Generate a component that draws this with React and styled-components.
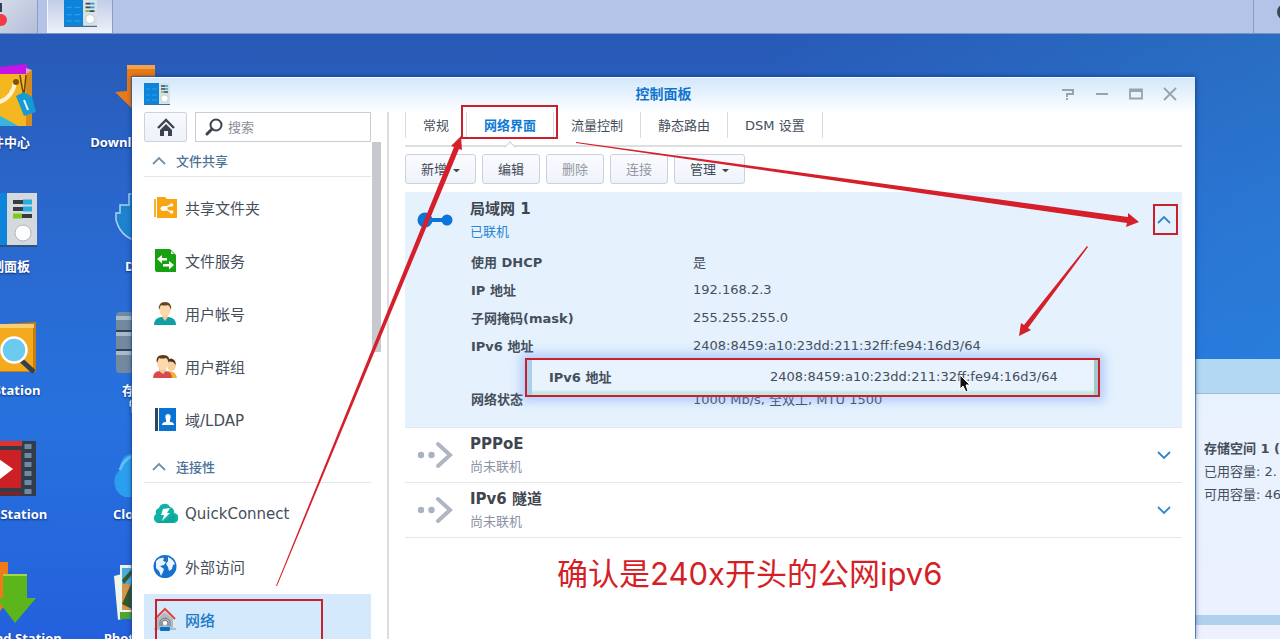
import styled, { createGlobalStyle } from "styled-components";

const GlobalStyle = createGlobalStyle`
  * {
    box-sizing: border-box;
  }

  body {
    margin: 0;
    overflow: hidden;
    font-family: "DejaVu Sans", "Noto Sans CJK SC", sans-serif;
    font-size: 13px;
    color: #454e5a;
  }

  button,
  input {
    font: inherit;
    color: inherit;
  }
`;

const Desktop = styled.div`
  position: relative;
  display: flex;
  flex-direction: column;
  height: 100vh;
  overflow: hidden;
  background: linear-gradient(
      90deg,
      rgba(42, 160, 225, 0) 60%,
      rgba(42, 160, 225, 0.28) 100%
    ),
    linear-gradient(180deg, #2857b2 0%, #2a66cb 30%, #2772de 65%, #2460dc 100%);
`;

/* Taskbar */

const Taskbar = styled.header`
  display: flex;
  flex: none;
  height: 34px;
  background: #b4c3e8;
  border-bottom: 1px solid #7d93c4;
`;

const TaskButton = styled.button`
  display: flex;
  padding: 0;
  width: ${(props) => (props.$active ? "66px" : "38px")};
  margin-right: 9px;
  border: 0;
  border-left: ${(props) => (props.$active ? "1px solid #f4f7fd" : "0")};
  border-right: 1px solid #8b9bc2;
  justify-content: ${(props) => (props.$active ? "center" : "flex-start")};
  background: ${(props) =>
    props.$active
      ? "linear-gradient(180deg, #c3cde8, #eef1fa)"
      : "linear-gradient(135deg, #d5dbea, #b3bed9)"};
`;

const Tray = styled.div`
  display: flex;
  width: 27px;
  margin-left: auto;
  border-left: 1px solid #8b9bc2;
  justify-content: flex-end;
`;

/* Desktop icons */

const IconGrid = styled.div`
  display: grid;
  grid-template-columns: 144px 144px;
  grid-auto-rows: 124px;
  margin: 28px 0 0 -68px;
`;

const Shortcut = styled.button`
  display: flex;
  flex-direction: column;
  align-items: center;
  gap: 8px;
  padding: 0;
  border: 0;
  background: none;
  color: white;
  font-family: "Open Sans", "Noto Sans CJK SC", sans-serif;
  font-weight: bold;
  line-height: 16px;
  text-shadow: 0 1px 2px rgba(0, 20, 80, 0.7);

  svg {
    flex: none;
    overflow: visible;
  }

  span {
    max-width: 120px;
    white-space: pre-line;
  }
`;

/* Storage widget */

const Widget = styled.aside`
  position: absolute;
  top: 359px;
  right: 0;
  bottom: 0;
  width: 100px;
  overflow: hidden;
  white-space: nowrap;
  background: #b1d0ee;
`;

const WidgetHead = styled.div`
  height: 35px;
  background: #b2d8f3;
  border-bottom: 1px solid #9dbcd8;
`;

const WidgetBody = styled.div`
  height: 221px;
  padding: 43px 0 0 24px;
  line-height: 23px;
  background: linear-gradient(180deg, #e8f2fd, #ebf1fe);

  p {
    margin: 0;
  }

  p:first-child {
    font-weight: bold;
  }
`;

const WidgetNext = styled.div`
  height: 40px;
  margin-top: 10px;
  background: #edf1fe;
`;

/* Control panel window */

const Window = styled.section`
  position: absolute;
  top: 77px;
  left: 132px;
  right: 85px;
  bottom: 0;
  display: flex;
  flex-direction: column;
  background: white;
  box-shadow: 0 0 0 1px rgba(22, 88, 170, 0.6), 0 0 5px rgba(0, 20, 70, 0.6);
`;

const TitleBar = styled.div`
  display: grid;
  grid-template-columns: 1fr auto 1fr;
  align-items: center;
  flex: none;
  height: 35px;
  padding: 0 17px 3px 12px;
  border-top: 1px solid #f3f9ff;
  background: linear-gradient(180deg, #d3e8fb, #fdfeff);
`;

const Title = styled.h1`
  margin: 0;
  padding-left: 5px;
  font-size: 14px;
  font-weight: bold;
  line-height: 20px;
  color: #0f75cf;
`;

const WindowButtons = styled.div`
  display: flex;
  justify-content: flex-end;
  gap: 18px;
`;

const PlainButton = styled.button`
  display: flex;
  padding: 0;
  border: 0;
  background: none;
`;

const WindowBody = styled.div`
  display: flex;
  flex: 1;
  min-height: 0;
`;

const Sidebar = styled.nav`
  display: flex;
  flex-direction: column;
  flex: none;
  width: 257px;
  padding-left: 12px;
  border-right: 2px solid #dddde1;
  overflow: hidden;
`;

const SearchRow = styled.div`
  display: flex;
  flex: none;
  gap: 8px;
  height: 30px;
`;

const HomeButton = styled.button`
  display: flex;
  align-items: center;
  justify-content: center;
  width: 43px;
  padding: 0;
  border: 1px solid #cdd3dd;
  border-radius: 2px;
  background: linear-gradient(180deg, #f7f9fd, #edf2fa);
`;

const SearchBox = styled.label`
  display: flex;
  align-items: center;
  gap: 5px;
  width: 176px;
  padding-left: 9px;
  border: 1px solid #c9ced6;

  input {
    width: 130px;
    padding: 0;
    border: 0;
    outline: 0;
  }

  input::placeholder {
    color: #8a8f98;
  }
`;

const SidebarScroll = styled.div`
  display: flex;
  gap: 1px;
`;

const ScrollThumb = styled.div`
  width: 9px;
  height: 210px;
  background: #c8c8cf;
`;

const Groups = styled.div`
  width: 227px;
`;

const GroupTitle = styled.button`
  display: flex;
  align-items: center;
  gap: 10px;
  width: 100%;
  height: 35px;
  padding: 3px 0 0 8px;
  border: 0;
  border-bottom: 1px solid #e2e7ed;
  background: none;
  color: #4b7396;
  font-weight: 500;
`;

const GroupList = styled.ul`
  margin: 0;
  padding: 5px 0 1px;
  list-style: none;
`;

const SideLink = styled.a`
  position: relative;
  display: flex;
  align-items: center;
  gap: 7px;
  height: 53px;
  padding: 0 0 2px 9px;
  font-size: 15px;
  text-decoration: none;
  color: ${(props) => (props.$active ? "#1c7ac8" : "#454e5a")};
  font-weight: ${(props) => (props.$active ? "500" : "400")};
  background: ${(props) => (props.$active ? "#d4e9fc" : "none")};
`;

const Content = styled.main`
  flex: 1;
  min-width: 0;
  padding: 0 13px 0 16px;
`;

const Tabs = styled.div`
  display: flex;
  height: 35px;
  padding-bottom: 7px;
  border-bottom: 2px solid #dedfe1;
`;

const Tab = styled.button`
  position: relative;
  padding: 0 17px 2px;
  border: 0;
  border-right: 1px solid #d9dce0;
  background: none;
  white-space: nowrap;
  color: ${(props) => (props.$active ? "#0f7ad6" : "inherit")};
  font-weight: ${(props) => (props.$active ? "bold" : "400")};

  &:first-child {
    border-left: 1px solid #d9dce0;
  }
`;

const Notch = styled.i`
  position: absolute;
  left: 50%;
  bottom: -13px;
  width: 8px;
  height: 8px;
  margin-left: -4px;
  border: solid #d0d2d5;
  border-width: 1px 0 0 1px;
  transform: rotate(45deg);
  background: white;
`;

const Toolbar = styled.div`
  display: flex;
  gap: 6px;
  padding: 7px 0 8px;
`;

const ToolButton = styled.button`
  display: flex;
  align-items: center;
  gap: 6px;
  height: 30px;
  padding: 0 15px 2px;
  border: 1px solid #c9d2df;
  border-radius: 3px;
  background: linear-gradient(180deg, #fafbfe, #eef3fb);
  color: ${(props) => (props.disabled ? "#9398a0" : "#414a56")};
  white-space: nowrap;
`;

const Caret = styled.i`
  width: 7px;
  margin-top: 4px;
  border: solid transparent;
  border-width: 3px 3px 0;
  border-top-color: #414a56;
`;

const Connection = styled.article`
  position: relative;
  border-bottom: 1px solid #e4e7eb;
  background: ${(props) => (props.$open ? "#e5f2fe" : "white")};
  height: ${(props) => (props.$open ? "236px" : "55px")};
`;

const ConnectionHead = styled.div`
  display: flex;
  align-items: center;
  gap: 16px;
  height: ${(props) => (props.$open ? "56px" : "54px")};
  padding: 0 11px 0 12px;

  > svg {
    flex: none;
  }

  button {
    position: relative;
    margin-left: auto;
  }
`;

const Name = styled.h2`
  margin: 0;
  font-size: 15px;
  line-height: 24px;
  color: #3f4650;
`;

const Status = styled.p`
  margin: 0;
  line-height: 22px;
  color: ${(props) => (props.$on ? "#2a86d2" : "#8b93a5")};
`;

const Details = styled.table`
  margin-left: 66px;
  border-collapse: collapse;

  th,
  td {
    height: 28px;
    padding: 0 0 2px;
    text-align: left;
    white-space: nowrap;
  }

  th {
    width: 222px;
  }

  tr:last-child th,
  tr:last-child td {
    height: 53px;
    padding-top: 25px;
  }
`;

const Callout = styled.div`
  position: absolute;
  top: 166px;
  left: 120px;
  width: 575px;
  height: 39px;
  display: flex;
  align-items: center;
  padding: 0 0 3px 22px;
  border: 2px solid #c9202e;
  background: #e8f3fd;
  box-shadow: inset 5px 0 0 #a9cfe9, inset -4px 0 0 #a3c9cc,
    inset 0 -4px 2px #c5e7e2, 0 0 10px 4px rgba(110, 150, 245, 0.45);

  b {
    flex: none;
    width: 221px;
  }
`;

const Note = styled.p`
  margin: 18px 0 0 152px;
  font-family: Inter, "Noto Sans CJK SC", sans-serif;
  font-size: 31px;
  font-weight: 400;
  line-height: 36px;
  color: #d51f27;
  white-space: nowrap;
`;

const Mark = styled.i`
  position: absolute;
  top: ${(props) => props.$top};
  right: ${(props) => props.$right};
  bottom: ${(props) => props.$bottom};
  left: ${(props) => props.$left};
  border: 2px solid #c9202e;
`;

const Arrows = styled.svg`
  position: absolute;
  top: 0;
  left: 0;
  pointer-events: none;
`;

function PanelIcon({ width, height }) {
  return (
    <svg width={width} height={height} viewBox="0 0 26 22" preserveAspectRatio="none">
      <rect y="1" width="26" height="21" fill="#3f6f94" />
      <rect width="15" height="21" fill="#0d83da" />
      <rect x="15" width="11" height="21" fill="#d9e0e6" />
      <path d="M2 6h4M8 6h5M2 12h4M8 12h5M2 17h4M8 17h5" stroke="#2a9fe6" strokeWidth="1" />
      <path d="M17 3h4M17 6h4M20 9h4" stroke="#37495a" strokeWidth="1.5" />
      <path d="M21 3h3M21 6h3" stroke="#22a4dc" strokeWidth="1.5" />
      <path d="M17 9h3" stroke="#6cc22b" strokeWidth="1.5" />
      <circle cx="20.5" cy="15.5" r="3.6" fill="#fbfdff" stroke="#b6c1ca" strokeWidth=".6" />
    </svg>
  );
}

function Chevron({ up, color = "#2f86cb", size = 14 }) {
  return (
    <svg width={size} height="10" viewBox="0 0 14 10" fill="none" stroke={color} strokeWidth="1.8">
      <path d={up ? "M1 8 7 2l6 6" : "M1 2l6 6 6-6"} />
    </svg>
  );
}

const sideIcons = {
  share: (
    <>
      <path d="M1 4h2v18H1z" fill="#f5b234" />
      <path d="M4 2h8l2 2h10v19H4z" fill="#f9a510" />
      <path d="m18 10-7 3 7 4" stroke="#fff" strokeWidth="1.4" fill="none" />
      <ellipse cx="11" cy="13.500" rx="3.500" ry="2.500" fill="#fff" />
      <circle cx="18.500" cy="10" r="1.800" fill="#fff" />
      <circle cx="18.500" cy="17" r="1.800" fill="#fff" />
    </>
  ),
  file: (
    <>
      <path d="M2 1h15l6 6v17H4a2 2 0 0 1-2-2z" fill="#17a00f" />
      <path d="m18 3 3 3h-3z" fill="#fff" />
      <path d="m4 11 5-4v3h5v2.500H9v3zM21 17l-5-4v3h-6v2.500h6v3z" fill="#fff" />
    </>
  ),
  user: (
    <>
      <path d="M1 24q0-7 7-8h8q7 1 7 8z" fill="#10a0a3" />
      <path d="M9 12h6v4l-3 4-3-4z" fill="#f3c99a" />
      <ellipse cx="12" cy="9" rx="5.500" ry="7" fill="#fbd9ad" />
      <path d="M6 9Q5 1 12 1t6 8q-1-4-3-5-4 1-7 0-1 2-2 5z" fill="#6a3f22" />
    </>
  ),
  group: (
    <>
      <path d="M15 17q8 0 9 7h-7z" fill="#f2b036" />
      <ellipse cx="18.500" cy="11" rx="4.500" ry="6" fill="#fbd0a0" />
      <path d="M14 7q4-5 8 0l1 4-3-3z" fill="#50301d" />
      <path d="M0 24q0-6 6-7h7q6 1 6 7z" fill="#d64b4c" />
      <path d="M6 13h7v4l-3 3-4-3z" fill="#f3c99a" />
      <ellipse cx="9.500" cy="9" rx="5.500" ry="7" fill="#fbd9ad" />
      <path d="M4 9Q2 1 10 1t6 8q-1-4-3-5-4 1-7 0-1 2-2 5z" fill="#5f3820" />
    </>
  ),
  ldap: (
    <>
      <path d="M2 1h3v23H2z" fill="#2f4559" />
      <path d="M6 1h17v23H6z" fill="#0a72d2" />
      <path d="M9 18q0-3 4-3v-2q-2-6 2-6t2 6v2q4 0 4 3z" fill="#fff" />
    </>
  ),
  quick: (
    <>
      <path d="M5 22a5 5 0 0 1-2-9 5 5 0 0 1 3-6 6 6 0 0 1 11-1 5 5 0 0 1 4 6 5 5 0 0 1-1 10z" fill="#10b2a8" />
      <path d="M4 20q10 2 15-7l4 3q0 5-4 6H5z" fill="#08998f" opacity=".5" />
      <path d="m10 8 7-1-3 5h3l-8 8 2-6H8z" fill="#fff" />
    </>
  ),
  globe: (
    <>
      <circle cx="12" cy="12.500" r="11.500" fill="#1670cc" />
      <path d="M3 7q4-4 8-3l-1 3 3 1-2 3-4 1 4 3-1 3-2 4-2-5-3-3zM15 3q5 2 7 7l-2 1-1 4-3 2-1-4-2-3 2-3z" fill="#eaf5ff" />
    </>
  ),
  network: (
    <>
      <path d="M4 12 12 5l8 7v9H4z" fill="#b4b9c0" />
      <path d="M7 19v-5q5-6 10 0v5M9 19v-4q3-4 6 0v4" stroke="#73777c" fill="none" />
      <circle cx="12" cy="16" r="2" fill="#fff" />
      <path d="M2 12 12 2l10 10" fill="none" stroke="#e2433d" strokeWidth="2" />
      <path d="M1 22h22" stroke="#8395a7" />
      <rect x="7" y="20" width="10" height="4" rx="1" fill="#0a72c6" />
    </>
  ),
};

const groups = [
  {
    title: "文件共享",
    items: [
      { icon: "share", label: "共享文件夹" },
      { icon: "file", label: "文件服务" },
      { icon: "user", label: "用户帐号" },
      { icon: "group", label: "用户群组" },
      { icon: "ldap", label: "域/LDAP" },
    ],
  },
  {
    title: "连接性",
    items: [
      { icon: "quick", label: "QuickConnect" },
      { icon: "globe", label: "外部访问" },
      { icon: "network", label: "网络", active: true },
    ],
  },
];

const shortcuts = [
  {
    label: "套件中心",
    art: (
      <>
        <path d="M0 8 54 2l6 14H0z" fill="#c414e8" />
        <path d="m54 6 6 2v12h-6z" fill="#e99cc4" />
        <path d="M0 12h60v52H0z" fill="#f4b71f" />
        <path d="M54 12l6-4v56h-6z" fill="#d48d1c" />
        <path d="M0 64V44q20 4 46 20z" fill="#38b5dc" />
        <path d="M18 42q22-2 25-22" fill="none" stroke="#fff3cf" strokeWidth="4" />
        <circle cx="44" cy="20" r="3" fill="#80500f" />
        <path d="M48 13q2 14 4 20l2-20" fill="none" stroke="#65440f" strokeWidth="1.500" />
        <path d="m44 34 8-4 8 5 4 15-12 4z" fill="#149bd5" />
        <path d="m52 38 4 10" stroke="#e7faff" strokeWidth="2" />
      </>
    ),
  },
  {
    label: "Download Station",
    art: (
      <>
        <path d="M11 3h28v26h12L32 62-1 30l12-1z" fill="#e97a18" />
        <path d="M11 3h28v4H11z" fill="#f2a14c" />
      </>
    ),
  },
  {
    label: "控制面板",
    art: (
      <>
        <path d="M0 8h65v53H0z" fill="#2b5380" />
        <path d="M0 7h35v52H0z" fill="#0d83da" />
        <path d="M35 7h30v52H35z" fill="#d5d8dc" />
        <path d="M41 16h12M41 23h12M50 30h10" stroke="#353b42" strokeWidth="4" />
        <path d="M51 16h9M51 23h9" stroke="#27aee3" strokeWidth="5" />
        <path d="M41 30h9" stroke="#78cc1f" strokeWidth="5" />
        <circle cx="51" cy="47" r="8" fill="#fbfdff" stroke="#b2b8bf" />
      </>
    ),
  },
  {
    label: "Docker",
    art: (
      <path
        d="M0 34V27h4v-8h9V8h44v19h8q-4 28-34 29Q6 56 0 34z"
        fill="#1e83cf"
        stroke="#a5d3f3"
        strokeWidth="1.500"
      />
    ),
  },
  {
    label: "File Station",
    art: (
      <>
        <path d="M0 16 64 12v50H0z" fill="#c77d12" />
        <path d="M0 18h61v43H0z" fill="#f5a91c" />
        <path d="M0 14h62v4H0z" fill="#f8cf73" />
        <path d="m49 50 13 12" stroke="#30404e" strokeWidth="5" />
        <circle cx="42" cy="40" r="12.500" fill="#6cc9f0" stroke="#fff" strokeWidth="2.500" />
      </>
    ),
  },
  {
    label: "存储空间\n管理员",
    art: (
      <>
        <rect y="2" width="64" height="61" rx="4" fill="#72899f" />
        <path d="M0 8h64M0 24h64M0 43h64" stroke="#a9bac9" strokeWidth="4" />
        <path d="M0 21h64M0 40h64" stroke="#2e4357" strokeWidth="2" />
      </>
    ),
  },
  {
    label: "Video Station",
    art: (
      <>
        <path d="M0 7h64v55H0z" fill="#333d49" />
        <path d="M0 7h50v5H0z" fill="#e2322c" />
        <path d="M0 16h49v38H0z" fill="#cd2024" />
        <path d="M0 58h49v3H0z" fill="#8e1c20" />
        <path d="m20 20 21 15-21 16z" fill="#fff" />
        <path d="M56 10v52" stroke="#7189a5" strokeWidth="7" strokeDasharray="5 4" />
      </>
    ),
  },
  {
    label: "Cloud Sync",
    art: (
      <>
        <path d="M9 63a16 16 0 0 1-4-28 12 12 0 0 1 10-15q32-10 44 14a15 15 0 0 1-4 29z" fill="#2a9ff0" />
        <path d="M4 36q4-12 14-14" fill="none" stroke="#62bdf7" strokeWidth="3" />
      </>
    ),
  },
  {
    label: "Download Station",
    art: (
      <>
        <path d="M4 4h32v28h10L22 60 0 32h4z" fill="#f0791a" />
        <path d="M31 16h24v24h9L43 65 24 40h7z" fill="#5db51c" />
        <path d="M31 16h24v2H31z" fill="#a2d74a" />
      </>
    ),
  },
  {
    label: "Photo Station",
    art: (
      <>
        <path d="m-2 18 8-2 4 44-8 2z" fill="#edf6e8" />
        <path d="M4 7h60v54H4z" fill="#eff6ee" />
        <path d="M6 10h56v22H6z" fill="#4cacd8" />
        <path d="M6 26h56v26H6z" fill="#d5974d" />
        <path d="m6 22 9-10 4 1-11 13zM6 46l10-22v27z" fill="#35582c" />
        <path d="M4 54h60v7H4z" fill="#4ea62c" />
      </>
    ),
  },
];

const details = [
  ["使用 DHCP", "是"],
  ["IP 地址", "192.168.2.3"],
  ["子网掩码(mask)", "255.255.255.0"],
  ["IPv6 地址", "2408:8459:a10:23dd:211:32ff:fe94:16d3/64"],
  ["网络状态", "1000 Mb/s, 全双工, MTU 1500"],
];

function SideGroup({ group }) {
  return (
    <>
      <GroupTitle>
        <Chevron up color="#7590a8" />
        {group.title}
      </GroupTitle>
      <GroupList>
        {group.items.map((item) => (
          <li key={item.label}>
            <SideLink href="#" $active={item.active}>
              <svg width="25" height="25" viewBox="0 0 25 25">
                {sideIcons[item.icon]}
              </svg>
              {item.label}
              {item.active && (
                <Mark $top="5px" $right="48px" $bottom="-8px" $left="11px" />
              )}
            </SideLink>
          </li>
        ))}
      </GroupList>
    </>
  );
}

function IdleConnection({ name }) {
  return (
    <Connection>
      <ConnectionHead>
        <svg width="37" height="28" viewBox="0 0 37 28">
          <circle cx="4" cy="14" r="3.200" fill="#aab1c3" />
          <circle cx="14.500" cy="14" r="3.200" fill="#aab1c3" />
          <path d="m21 3 12 11-12 11" fill="none" stroke="#b0b5c2" strokeWidth="4" strokeLinecap="round" />
        </svg>
        <div>
          <Name>{name}</Name>
          <Status>尚未联机</Status>
        </div>
        <PlainButton aria-label="展开">
          <Chevron />
        </PlainButton>
      </ConnectionHead>
    </Connection>
  );
}

function ControlPanel() {
  return (
    <Window>
      <TitleBar>
        <PanelIcon width={26} height={22} />
        <Title>控制面板</Title>
        <WindowButtons>
          <PlainButton aria-label="帮助">
            <svg width="16" height="16" viewBox="0 0 16 16" fill="none" stroke="#9aa2aa" strokeWidth="2">
              <path d="M2 4h11v4H7v3M7 12v2" />
            </svg>
          </PlainButton>
          <PlainButton aria-label="最小化">
            <svg width="16" height="16" viewBox="0 0 16 16" stroke="#9aa2aa" strokeWidth="2">
              <path d="M2 8h12" />
            </svg>
          </PlainButton>
          <PlainButton aria-label="最大化">
            <svg width="16" height="16" viewBox="0 0 16 16" fill="none" stroke="#9aa2aa" strokeWidth="1.800">
              <path d="M2 3.500h12v9H2zM2 5h12" />
            </svg>
          </PlainButton>
          <PlainButton aria-label="关闭">
            <svg width="16" height="16" viewBox="0 0 16 16" stroke="#9aa2aa" strokeWidth="1.800">
              <path d="m2 2 12 12M14 2 2 14" />
            </svg>
          </PlainButton>
        </WindowButtons>
      </TitleBar>

      <WindowBody>
        <Sidebar>
          <SearchRow>
            <HomeButton aria-label="主页">
              <svg width="18" height="18" viewBox="0 0 18 18">
                <path d="M1 10 9 2l8 8" fill="none" stroke="#3c434e" strokeWidth="2.400" />
                <path d="m3 12 6-6 6 6v6h-4v-5H7v5H3z" fill="#3c434e" />
              </svg>
            </HomeButton>
            <SearchBox>
              <svg width="18" height="18" viewBox="0 0 18 18" fill="none" stroke="#3c434e">
                <circle cx="11" cy="7" r="5.500" strokeWidth="2" />
                <path d="m7 11-5 5" strokeWidth="3" strokeLinecap="round" />
              </svg>
              <input type="text" placeholder="搜索" aria-label="搜索" />
            </SearchBox>
          </SearchRow>
          <SidebarScroll>
            <Groups>
              {groups.map((group) => (
                <SideGroup key={group.title} group={group} />
              ))}
            </Groups>
            <ScrollThumb />
          </SidebarScroll>
        </Sidebar>

        <Content>
          <Tabs>
            <Tab>常规</Tab>
            <Tab $active>
              网络界面
              <Notch />
              <Mark $top="-7px" $right="-5px" $bottom="-1px" $left="-6px" />
            </Tab>
            <Tab>流量控制</Tab>
            <Tab>静态路由</Tab>
            <Tab>DSM 设置</Tab>
          </Tabs>
          <Toolbar>
            <ToolButton>
              新增
              <Caret />
            </ToolButton>
            <ToolButton>编辑</ToolButton>
            <ToolButton disabled>删除</ToolButton>
            <ToolButton disabled>连接</ToolButton>
            <ToolButton>
              管理
              <Caret />
            </ToolButton>
          </Toolbar>

          <Connection $open>
            <ConnectionHead $open>
              <svg width="37" height="16" viewBox="0 0 37 16" fill="#0a76db">
                <circle cx="8" cy="8" r="7.500" />
                <path d="M8 6h22v4H8z" />
                <circle cx="30" cy="8" r="5.500" />
              </svg>
              <div>
                <Name>局域网 1</Name>
                <Status $on>已联机</Status>
              </div>
              <PlainButton aria-label="收起">
                <Chevron up />
                <Mark $top="-11px" $right="-7px" $bottom="-10px" $left="-4px" />
              </PlainButton>
            </ConnectionHead>
            <Details>
              <tbody>
                {details.map(([label, value]) => (
                  <tr key={label}>
                    <th scope="row">{label}</th>
                    <td>{value}</td>
                  </tr>
                ))}
              </tbody>
            </Details>
            <Callout>
              <b>IPv6 地址</b>
              <span>2408:8459:a10:23dd:211:32ff:fe94:16d3/64</span>
            </Callout>
          </Connection>
          <IdleConnection name="PPPoE" />
          <IdleConnection name="IPv6 隧道" />
          <Note>确认是240x开头的公网ipv6</Note>
        </Content>
      </WindowBody>
    </Window>
  );
}

function App() {
  return (
    <>
      <GlobalStyle />
      <Desktop>
        <Taskbar>
          <TaskButton aria-label="主菜单">
            <svg width="8" height="30" viewBox="0 0 8 30">
              <path d="M0 3h2v9H0z" fill="#343f55" />
              <circle cx="1" cy="20" r="6" fill="#f23b44" />
            </svg>
          </TaskButton>
          <TaskButton $active aria-label="控制面板">
            <PanelIcon width={33} height={27} />
          </TaskButton>
          <Tray>
            <svg width="4" height="30" viewBox="0 0 4 30">
              <circle cx="9" cy="12" r="8" fill="#3b4658" />
            </svg>
          </Tray>
        </Taskbar>

        <IconGrid>
          {shortcuts.map((item, index) => (
            <Shortcut key={index}>
              <svg width="64" height="64" viewBox="0 0 64 64">
                {item.art}
              </svg>
              <span>{item.label}</span>
            </Shortcut>
          ))}
        </IconGrid>

        <Widget>
          <WidgetHead />
          <WidgetBody>
            <p>存储空间 1 (</p>
            <p>已用容量: 2.</p>
            <p>可用容量: 46</p>
          </WidgetBody>
          <WidgetNext />
        </Widget>

        <ControlPanel />

        <Arrows width="1280" height="639" viewBox="0 0 1280 639">
          <g fill="#d51f2a">
            <path d="m276 586 178-439-3-1 10-10 1 14-3-1-182 437z" />
            <path d="m576 142 552 75v-4l11 9-13 5 1-4-551-80z" />
            <path d="m1087 246-63 79-3-2-2 13 12-6-3-2 60-81z" />
          </g>
          <path
            d="M960 375v14l3-3 3 6 2-1-2-6h4z"
            fill="#111"
            stroke="#fff"
            strokeWidth="1"
          />
        </Arrows>
      </Desktop>
    </>
  );
}

export default App;
